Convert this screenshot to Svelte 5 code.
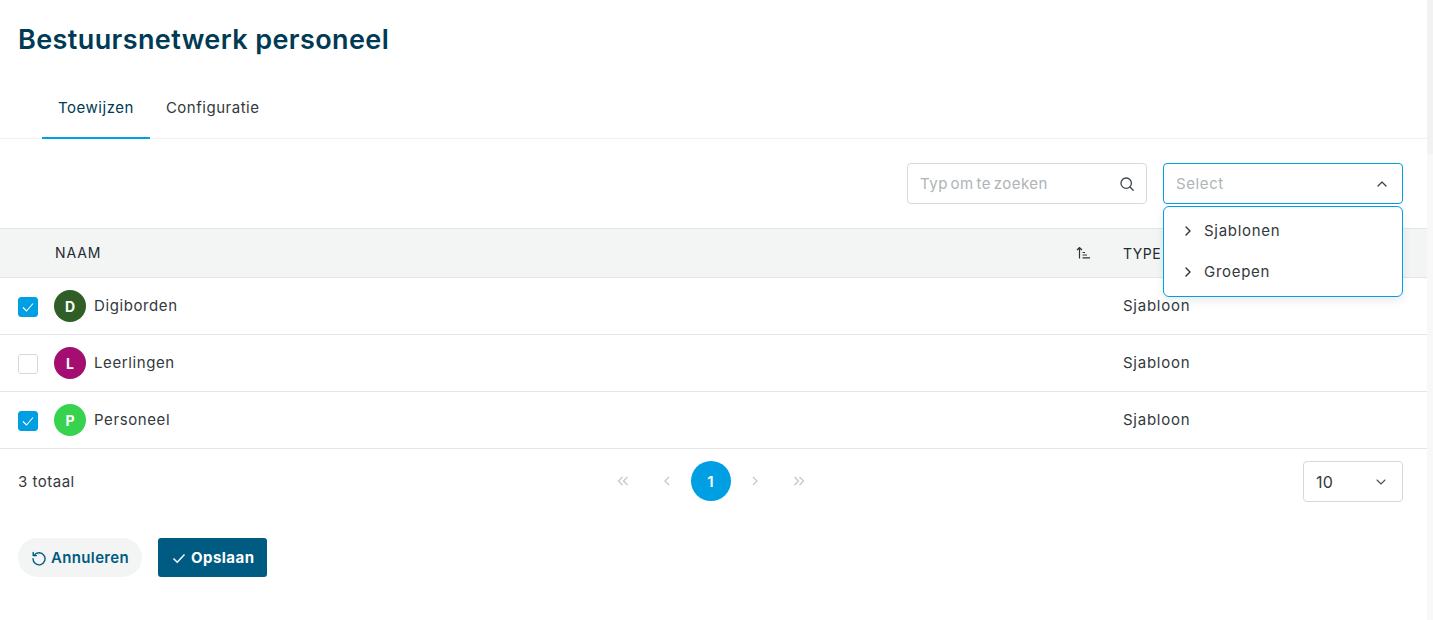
<script>
    const rows = [
        { name: "Digiborden", type: "Sjabloon", initial: "D", color: "#2f5f26", checked: true },
        { name: "Leerlingen", type: "Sjabloon", initial: "L", color: "#a30e70", checked: false },
        { name: "Personeel", type: "Sjabloon", initial: "P", color: "#37d34f", checked: true }
    ];
    const options = ["Sjablonen", "Groepen"];
</script>

<div class="page">
    <main class="content">
        <h1 class="title">Bestuursnetwerk personeel</h1>

        <nav class="tabs">
            <div class="tab tab-active">Toewijzen</div>
            <div class="tab">Configuratie</div>
        </nav>

        <div class="toolbar">
            <div class="field search">
                <span class="placeholder search-text">Typ om te zoeken</span>
                <svg width="16" height="16" viewBox="0 0 16 16" fill="none" stroke="#3c4448" stroke-width="1.3">
                    <circle cx="7.2" cy="7.2" r="5.2" />
                    <path d="M11 11l3.2 3.2" stroke-linecap="round" />
                </svg>
            </div>
            <div class="select-wrap">
                <div class="field select-open">
                    <span class="placeholder">Select</span>
                    <svg width="12" height="12" viewBox="0 0 12 12" fill="none" stroke="#3c4448" stroke-width="1.3">
                        <path d="M2 8l4-4 4 4" stroke-linecap="round" stroke-linejoin="round" />
                    </svg>
                </div>
                <div class="menu">
                    {#each options as option}
                        <div class="menu-item">
                            <svg width="10" height="12" viewBox="0 0 10 12" fill="none" stroke="#2c3336" stroke-width="1.4">
                                <path d="M3 2l4 4-4 4" stroke-linecap="round" stroke-linejoin="round" />
                            </svg>
                            <span>{option}</span>
                        </div>
                    {/each}
                </div>
            </div>
        </div>

        <div class="table">
            <div class="row head">
                <div class="cell-check"></div>
                <div class="cell-name">
                    <span class="head-name">NAAM</span>
                    <svg class="sort" width="14" height="14" viewBox="0 0 14 14" fill="none" stroke="#2c3336" stroke-width="1.2">
                        <path d="M3.5 12.5V1.5M1 4l2.5-2.5L6 4M6.5 6.5h2.5M6.5 9h4.5M6.5 11.8h7.5" />
                    </svg>
                </div>
                <div class="cell-type">TYPE</div>
            </div>
            {#each rows as row}
                <div class="row">
                    <div class="cell-check">
                        <span class="checkbox" class:checked={row.checked}>
                            {#if row.checked}
                                <svg width="14" height="14" viewBox="0 0 14 14" fill="none" stroke="#fff" stroke-width="1.1">
                                    <path d="M2 7.5l3.5 3.5L12 3.5" />
                                </svg>
                            {/if}
                        </span>
                    </div>
                    <div class="cell-name">
                        <span class="avatar" style={`background-color: ${row.color}`}>{row.initial}</span>
                        <span class="name">{row.name}</span>
                    </div>
                    <div class="cell-type">{row.type}</div>
                </div>
            {/each}
        </div>

        <div class="footer">
            <div class="total">3 totaal</div>
            <div class="pager">
                <span class="pg-item"><svg class="pg" width="12" height="12" viewBox="0 0 12 12"><path d="M5.5 2l-4 4 4 4M10.5 2l-4 4 4 4" /></svg></span>
                <span class="pg-item"><svg class="pg" width="12" height="12" viewBox="0 0 12 12"><path d="M8 2L4 6l4 4" /></svg></span>
                <span class="pg-item"><span class="page-current">1</span></span>
                <span class="pg-item"><svg class="pg" width="12" height="12" viewBox="0 0 12 12"><path d="M4 2l4 4-4 4" /></svg></span>
                <span class="pg-item"><svg class="pg" width="12" height="12" viewBox="0 0 12 12"><path d="M1.5 2l4 4-4 4M6.5 2l4 4-4 4" /></svg></span>
            </div>
            <div class="field size">
                <span>10</span>
                <svg width="12" height="12" viewBox="0 0 12 12" fill="none" stroke="#4a5256" stroke-width="1.1">
                    <path d="M2 4l4 4 4-4" stroke-linecap="round" stroke-linejoin="round" />
                </svg>
            </div>
        </div>

        <div class="actions">
            <button class="btn btn-cancel">
                <svg width="16" height="16" viewBox="0 0 16 16" fill="none" stroke="#005b82" stroke-width="1.4">
                    <path d="M3.2 5.2A6 6 0 1 1 2 8.6" stroke-linecap="round" />
                    <path d="M2.2 2.4v3.2h3.2" stroke-linecap="round" stroke-linejoin="round" />
                </svg>
                Annuleren
            </button>
            <button class="btn btn-save">
                <svg width="14" height="14" viewBox="0 0 14 14" fill="none" stroke="#fff" stroke-width="1.5">
                    <path d="M1.5 7.5l3.7 3.7L12.5 3.5" />
                </svg>
                Opslaan
            </button>
        </div>
    </main>
    <div class="scrollbar">
        <div class="scrollbar-thumb"></div>
    </div>
</div>

<style>
    :global(body) {
        margin: 0;
        background: #fff;
        overflow: hidden;
    }

    .page {
        display: flex;
        height: 620px;
        font-family: Inter, "Liberation Sans", sans-serif;
        color: #33393c;
        font-size: 15px;
        letter-spacing: 0.6px;
    }

    .content {
        flex: 1;
        min-width: 0;
    }

    .scrollbar {
        width: 6px;
        background: #f8f8f8;
    }

    .scrollbar-thumb {
        height: 154px;
        background: #f2f2f2;
    }

    .title {
        margin: 0;
        padding: 22px 0 0 18px;
        height: 52px;
        font-size: 27px;
        line-height: 36px;
        font-weight: 600;
        letter-spacing: 0.4px;
        color: #003a55;
    }

    .tabs {
        display: flex;
        padding: 0 0 0 42px;
        height: 64px;
        border-bottom: 1px solid #f0f2f2;
    }

    .tab {
        padding: 0 16px;
        line-height: 68px;
        height: 63px;
        letter-spacing: 0.52px;
    }

    .tab-active {
        color: #003a55;
        border-bottom: 2px solid #009fe3;
    }

    .toolbar {
        display: flex;
        justify-content: flex-end;
        gap: 16px;
        padding: 24px 24px 24px 0;
    }

    .field {
        box-sizing: border-box;
        display: flex;
        align-items: center;
        justify-content: space-between;
        height: 41px;
        padding: 0 12px;
        background: #fff;
        border: 1px solid #d6d9da;
        border-radius: 4px;
    }

    .search {
        width: 240px;
        padding-right: 11px;
    }

    .placeholder {
        color: #aeb4b7;
    }

    .search-text {
        letter-spacing: 0.5px;
        word-spacing: -2px;
    }

    .select-wrap {
        position: relative;
        width: 240px;
    }

    .select-open {
        border-color: #009fe3;
        padding-right: 14px;
    }

    .menu {
        position: absolute;
        z-index: 2;
        top: 43px;
        left: 0;
        right: 0;
        box-sizing: border-box;
        padding: 3px 0 4px;
        background: #fff;
        border: 1px solid #009fe3;
        border-radius: 6px;
        box-shadow: 0 4px 10px rgba(0, 0, 0, 0.08);
    }

    .menu-item {
        display: flex;
        align-items: center;
        gap: 11px;
        height: 41px;
        padding-left: 19px;
        letter-spacing: 0.7px;
    }

    .table {
        border-top: 1px solid #e4e7e7;
    }

    .row {
        display: flex;
        align-items: center;
        height: 56px;
        border-bottom: 1px solid #e4e7e7;
    }

    .head {
        height: 48px;
        background: #f3f5f5;
        font-size: 14px;
        color: #1f2a30;
    }

    .head-name {
        margin: -2px 0 0 1px;
        letter-spacing: 0.9px;
    }

    .head .cell-type {
        margin-top: 0;
        letter-spacing: 0.5px;
    }

    .cell-check {
        width: 54px;
        padding-left: 18px;
        box-sizing: border-box;
        display: flex;
    }

    .cell-name {
        flex: 1;
        display: flex;
        align-items: center;
        gap: 8px;
    }

    .name {
        margin-top: -2px;
    }

    .sort {
        margin-left: auto;
        margin-right: 33px;
    }

    .cell-type {
        width: 304px;
        margin-top: -2px;
        letter-spacing: 0.75px;
    }

    .checkbox {
        box-sizing: border-box;
        display: flex;
        align-items: center;
        justify-content: center;
        width: 20px;
        height: 20px;
        margin-top: 2px;
        background: #fff;
        border: 1px solid #d6d9da;
        border-radius: 3px;
    }

    .checked {
        background: #009fe3;
        border-color: #009fe3;
    }

    .avatar {
        display: flex;
        align-items: center;
        justify-content: center;
        width: 32px;
        height: 32px;
        border-radius: 50%;
        color: #fff;
        font-size: 14px;
        font-weight: 700;
        letter-spacing: 0;
    }

    .footer {
        display: flex;
        align-items: flex-start;
        justify-content: space-between;
        height: 65px;
        box-sizing: border-box;
        padding: 12px 24px 0 18px;
    }

    .total {
        width: 100px;
        line-height: 41px;
        letter-spacing: 0.5px;
    }

    .pager {
        display: flex;
        align-items: center;
    }

    .pg-item {
        display: flex;
        align-items: center;
        justify-content: center;
        width: 44px;
        height: 40px;
    }

    .pg {
        fill: none;
        stroke: #c4c8ca;
        stroke-width: 1.3;
    }

    .page-current {
        display: flex;
        align-items: center;
        justify-content: center;
        width: 40px;
        height: 40px;
        border-radius: 50%;
        background: #009fe3;
        color: #fff;
        font-weight: 600;
        letter-spacing: 0;
    }

    .size {
        width: 100px;
        padding: 0 15px 0 12px;
        font-size: 16px;
        letter-spacing: 0.3px;
    }

    .actions {
        display: flex;
        gap: 16px;
        padding: 24px 0 0 18px;
    }

    .btn {
        display: flex;
        align-items: center;
        gap: 4px;
        height: 39px;
        border: none;
        font-family: inherit;
        font-size: 15px;
        font-weight: 600;
        letter-spacing: 0.35px;
    }

    .btn-cancel {
        padding: 0 13px;
        border-radius: 20px;
        background: #f3f5f5;
        color: #005b82;
    }

    .btn-save {
        gap: 5px;
        padding: 0 13px 0 14px;
        border-radius: 3px;
        background: #005b82;
        color: #fff;
        font-weight: 700;
        letter-spacing: 0.45px;
    }
</style>
